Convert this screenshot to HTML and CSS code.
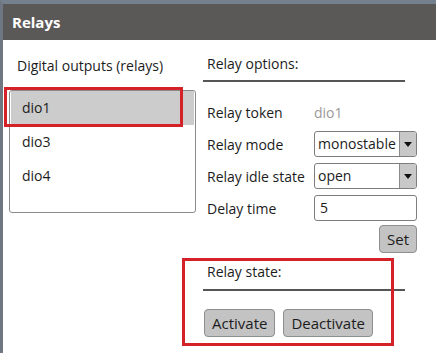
FILE: index.html
```html
<!DOCTYPE html>
<html lang="en">
<head>
    <meta charset="UTF-8">
    <title>Relays</title>
    <link rel="stylesheet" href="styles.css">
</head>
<body>
    <div class="window">
        <div class="titlebar">Relays</div>

        <div class="content">
            <!-- Lista uscite digitali -->
            <div class="outputs">
                <div class="outputs-title">Digital outputs (relays)</div>
                <div class="relay-list">
                    <div class="relay-item selected">dio1</div>
                    <div class="relay-item">dio3</div>
                    <div class="relay-item">dio4</div>
                </div>
            </div>

            <!-- Opzioni del relay -->
            <div class="options">
                <div class="section-title">Relay options:</div>
                <div class="option-grid">
                    <div class="opt-label">Relay token</div>
                    <div class="opt-value">dio1</div>

                    <div class="opt-label">Relay mode</div>
                    <div class="select">
                        <span class="select-text">monostable</span>
                        <span class="select-arrow"></span>
                    </div>

                    <div class="opt-label">Relay idle state</div>
                    <div class="select">
                        <span class="select-text">open</span>
                        <span class="select-arrow"></span>
                    </div>

                    <div class="opt-label">Delay time</div>
                    <div class="text-input">5</div>
                </div>
                <div class="set-row">
                    <button class="btn">Set</button>
                </div>

                <div class="section-title state-title">Relay state:</div>
                <div class="state-buttons">
                    <button class="btn">Activate</button>
                    <button class="btn">Deactivate</button>
                </div>
            </div>
        </div>

        <!-- Riquadri rossi di evidenziazione -->
        <div class="mark mark-list"></div>
        <div class="mark mark-state"></div>
    </div>
</body>
</html>
```

FILE: styles.css
```css
body {
    margin: 0;
    font-family: "Open Sans", "Noto Sans", sans-serif;
    background-color: #fff;
}
.window {
    position: relative;
    width: 436px;
    height: 353px;
    box-sizing: border-box;
    border-top: 4px solid #74808d;
    border-left: 3px solid #6f7882;
    background-color: #fff;
    overflow: hidden;
}
.titlebar {
    height: 36px;
    line-height: 36px;
    background-color: #5b5957;
    color: #fff;
    font-weight: bold;
    font-size: 15px;
    padding-left: 9px;
}
.content {
    display: grid;
    grid-template-columns: 187px 214px;
    column-gap: 7px;
    padding-left: 6px;
    color: #1c1c1c;
    font-size: 14px;
}
.outputs-title {
    padding: 14px 0 0 8px;
    line-height: 24px;
    height: 24px;
    margin-bottom: 12px;
}
.relay-list {
    height: 123px;
    box-sizing: border-box;
    border: 1px solid #8a8a8a;
    border-radius: 3px;
    padding: 0 1px;
}
.relay-item {
    height: 34px;
    line-height: 34px;
    padding-left: 11px;
}
.relay-item.selected {
    background-color: #cccccc;
}
.section-title {
    padding: 12px 0 0 4px;
    line-height: 24px;
    height: 24px;
    padding-bottom: 4px;
    border-bottom: 2px solid #555;
    width: 198px;
}
.option-grid {
    display: grid;
    grid-template-columns: 111px 103px;
    grid-auto-rows: 26px;
    row-gap: 6px;
    align-items: center;
    margin-top: 17px;
}
.opt-label {
    padding-left: 4px;
    white-space: nowrap;
}
.opt-value {
    color: #9a9a9a;
}
.select {
    display: flex;
    height: 26px;
    box-sizing: border-box;
    border: 1px solid #7d7d7d;
    border-radius: 3px;
    overflow: hidden;
}
.select-text {
    flex: 1;
    padding-left: 3px;
    line-height: 24px;
    white-space: nowrap;
}
.select-arrow {
    width: 16px;
    background-color: #c8c8c8;
    border-left: 1px solid #8a8a8a;
    position: relative;
}
.select-arrow::after {
    content: "";
    position: absolute;
    left: 4px;
    top: 10px;
    border-left: 4px solid transparent;
    border-right: 4px solid transparent;
    border-top: 5px solid #111;
}
.text-input {
    height: 26px;
    box-sizing: border-box;
    border: 1px solid #7d7d7d;
    border-radius: 3px;
    padding-left: 5px;
    line-height: 24px;
}
.set-row {
    display: flex;
    justify-content: flex-end;
    margin-top: 4px;
}
.btn {
    height: 28px;
    padding: 0 7px;
    font-family: inherit;
    font-size: 15px;
    color: #1c1c1c;
    background-color: #c3c3c3;
    border: 1px solid #8e8e8e;
    border-radius: 4px;
}
.state-title {
    margin-top: 7px;
    padding-top: 0;
    padding-bottom: 5px;
}
.state-buttons {
    display: flex;
    gap: 8px;
    margin-top: 18px;
    margin-left: 1px;
}
.mark {
    position: absolute;
    border: 3px solid #d52128;
}
.mark-list {
    left: 1px;
    top: 83px;
    width: 173px;
    height: 34px;
}
.mark-state {
    left: 179px;
    top: 254px;
    width: 206px;
    height: 82px;
}
```
